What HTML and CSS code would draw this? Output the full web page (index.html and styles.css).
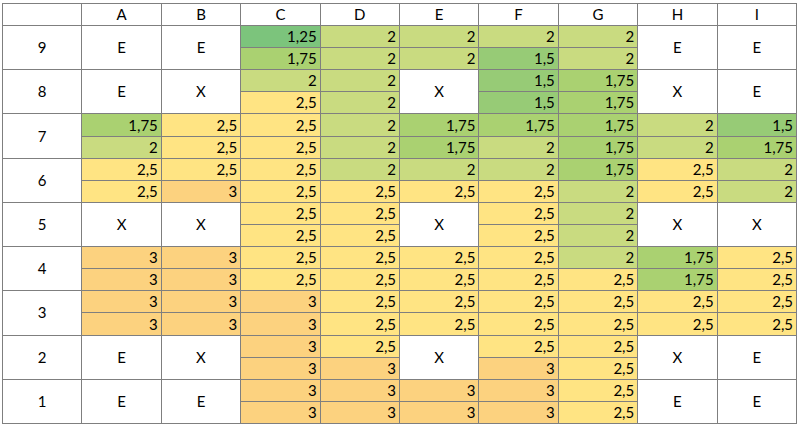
FILE: index.html
```html
<!DOCTYPE html>
<html>
<head>
<meta charset="utf-8">
<link rel="stylesheet" href="styles.css">
</head>
<body>
<div class="sheet">
  <div class="c hd"></div><div class="c hd">A</div><div class="c hd">B</div><div class="c hd">C</div><div class="c hd">D</div><div class="c hd">E</div><div class="c hd">F</div><div class="c hd">G</div><div class="c hd">H</div><div class="c hd">I</div>

  <!-- 9 -->
  <div class="c m">9</div><div class="c m">E</div><div class="c m">E</div>
  <div class="c n v125">1,25</div><div class="c n v2">2</div><div class="c n v2">2</div><div class="c n v2">2</div><div class="c n v2">2</div>
  <div class="c m">E</div><div class="c m">E</div>
  <div class="c n v175">1,75</div><div class="c n v2">2</div><div class="c n v2">2</div><div class="c n v15">1,5</div><div class="c n v2">2</div>

  <!-- 8 -->
  <div class="c m">8</div><div class="c m">E</div><div class="c m">X</div>
  <div class="c n v2">2</div><div class="c n v2">2</div><div class="c m">X</div><div class="c n v15">1,5</div><div class="c n v175">1,75</div>
  <div class="c m">X</div><div class="c m">E</div>
  <div class="c n v25">2,5</div><div class="c n v2">2</div><div class="c n v15">1,5</div><div class="c n v175">1,75</div>

  <!-- 7 -->
  <div class="c m">7</div>
  <div class="c n v175">1,75</div><div class="c n v25">2,5</div><div class="c n v25">2,5</div><div class="c n v2">2</div><div class="c n v175">1,75</div><div class="c n v175">1,75</div><div class="c n v175">1,75</div><div class="c n v2">2</div><div class="c n v15">1,5</div>
  <div class="c n v2">2</div><div class="c n v25">2,5</div><div class="c n v25">2,5</div><div class="c n v2">2</div><div class="c n v175">1,75</div><div class="c n v2">2</div><div class="c n v175">1,75</div><div class="c n v2">2</div><div class="c n v175">1,75</div>

  <!-- 6 -->
  <div class="c m">6</div>
  <div class="c n v25">2,5</div><div class="c n v25">2,5</div><div class="c n v25">2,5</div><div class="c n v2">2</div><div class="c n v2">2</div><div class="c n v2">2</div><div class="c n v175">1,75</div><div class="c n v25">2,5</div><div class="c n v2">2</div>
  <div class="c n v25">2,5</div><div class="c n v3">3</div><div class="c n v25">2,5</div><div class="c n v25">2,5</div><div class="c n v25">2,5</div><div class="c n v25">2,5</div><div class="c n v2">2</div><div class="c n v25">2,5</div><div class="c n v2">2</div>

  <!-- 5 -->
  <div class="c m">5</div><div class="c m">X</div><div class="c m">X</div>
  <div class="c n v25">2,5</div><div class="c n v25">2,5</div><div class="c m">X</div><div class="c n v25">2,5</div><div class="c n v2">2</div>
  <div class="c m">X</div><div class="c m">X</div>
  <div class="c n v25">2,5</div><div class="c n v25">2,5</div><div class="c n v25">2,5</div><div class="c n v2">2</div>

  <!-- 4 -->
  <div class="c m">4</div>
  <div class="c n v3">3</div><div class="c n v3">3</div><div class="c n v25">2,5</div><div class="c n v25">2,5</div><div class="c n v25">2,5</div><div class="c n v25">2,5</div><div class="c n v2">2</div><div class="c n v175">1,75</div><div class="c n v25">2,5</div>
  <div class="c n v3">3</div><div class="c n v3">3</div><div class="c n v25">2,5</div><div class="c n v25">2,5</div><div class="c n v25">2,5</div><div class="c n v25">2,5</div><div class="c n v25">2,5</div><div class="c n v175">1,75</div><div class="c n v25">2,5</div>

  <!-- 3 -->
  <div class="c m">3</div>
  <div class="c n v3">3</div><div class="c n v3">3</div><div class="c n v3">3</div><div class="c n v25">2,5</div><div class="c n v25">2,5</div><div class="c n v25">2,5</div><div class="c n v25">2,5</div><div class="c n v25">2,5</div><div class="c n v25">2,5</div>
  <div class="c n v3">3</div><div class="c n v3">3</div><div class="c n v3">3</div><div class="c n v25">2,5</div><div class="c n v25">2,5</div><div class="c n v25">2,5</div><div class="c n v25">2,5</div><div class="c n v25">2,5</div><div class="c n v25">2,5</div>

  <!-- 2 -->
  <div class="c m">2</div><div class="c m">E</div><div class="c m">X</div>
  <div class="c n v3">3</div><div class="c n v25">2,5</div><div class="c m">X</div><div class="c n v25">2,5</div><div class="c n v25">2,5</div>
  <div class="c m">X</div><div class="c m">E</div>
  <div class="c n v3">3</div><div class="c n v3">3</div><div class="c n v3">3</div><div class="c n v25">2,5</div>

  <!-- 1 -->
  <div class="c m">1</div><div class="c m">E</div><div class="c m">E</div>
  <div class="c n v3">3</div><div class="c n v3">3</div><div class="c n v3">3</div><div class="c n v3">3</div><div class="c n v25">2,5</div>
  <div class="c m">E</div><div class="c m">E</div>
  <div class="c n v3">3</div><div class="c n v3">3</div><div class="c n v3">3</div><div class="c n v3">3</div><div class="c n v25">2,5</div>
</div>
</body>
</html>
```
FILE: styles.css
```css
html, body {
  margin: 0;
  padding: 0;
  background: #ffffff;
}
body {
  padding: 3px 0 0 2px;
  font-family: Lato, "Open Sans", "Liberation Sans", sans-serif;
  font-size: 15px;
  color: #000;
}
.sheet {
  width: 795px;
  height: 421px;
  box-sizing: border-box;
  padding: 1px;
  background: #7f7f7f;
  display: grid;
  grid-template-columns: repeat(10, 1fr);
  grid-template-rows: 21px repeat(18, 1fr);
  gap: 1px;
}
.c {
  background: #ffffff;
  display: flex;
  min-width: 0;
  min-height: 0;
  overflow: hidden;
  line-height: 1;
}
.hd {
  align-items: center;
  justify-content: center;
}
.m {
  grid-row: span 2;
  align-items: center;
  justify-content: center;
}
.n {
  align-items: flex-end;
  justify-content: flex-end;
  padding: 0 3px 3px 0;
}
.v125 { background: #7cc47c; }
.v15  { background: #97cb76; }
.v175 { background: #aad171; }
.v2   { background: #c9db80; }
.v25  { background: #ffe483; }
.v3   { background: #fcd27f; }
```
